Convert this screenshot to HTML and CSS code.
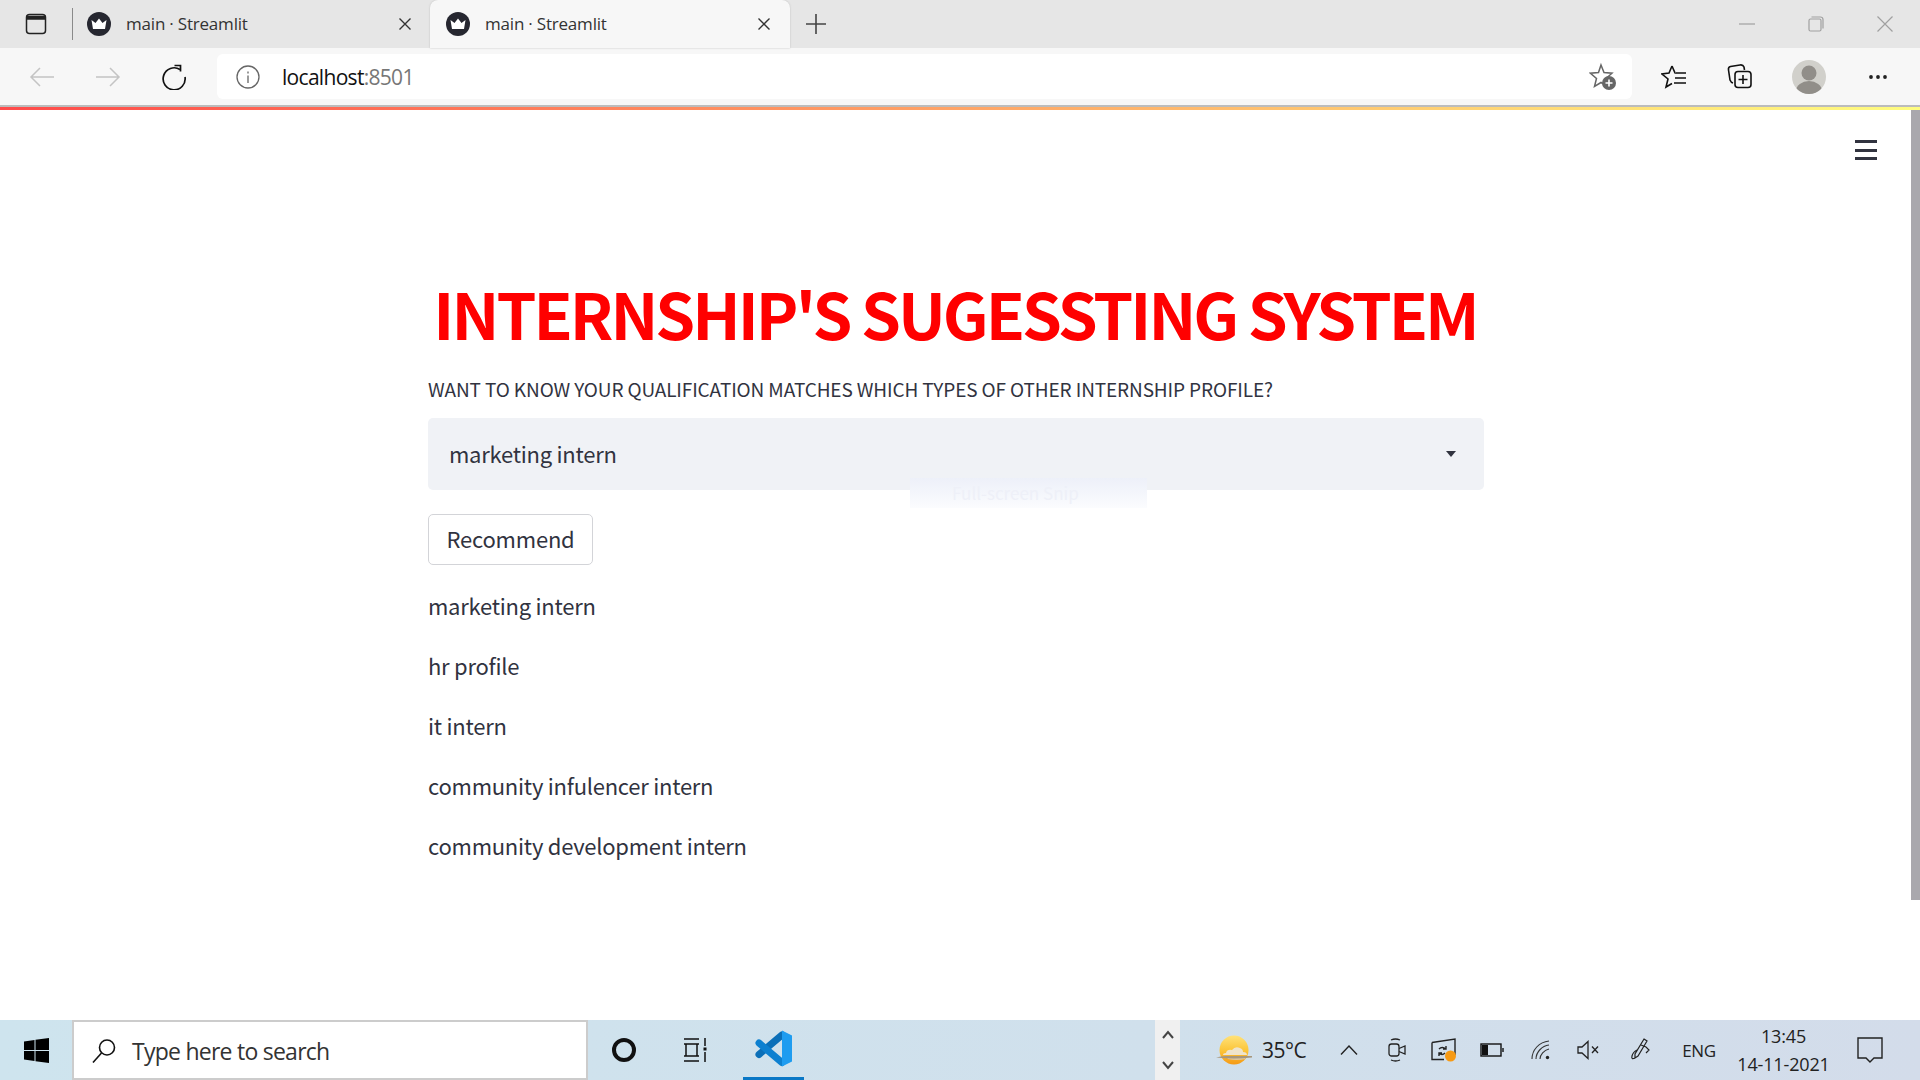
FILE: index.html
```html
<!DOCTYPE html>
<html lang="en">
<head>
	<meta charset="UTF-8">
	<title>main · Streamlit</title>
	<link rel="stylesheet" href="styles.css">
</head>
<body>
	<div class="tabstrip">
		<div class="strip-btn">
			<svg width="24" height="24" viewBox="0 0 24 24" fill="none" stroke="#222" stroke-width="1.5"><rect x="2.5" y="2.500" width="19" height="19" rx="3"/><path d="M3 4.500h18v2.500H3z" fill="#222"/></svg>
		</div>
		<div class="tab">
			<svg class="favicon" width="24" height="24" viewBox="0 0 24 24"><circle cx="12" cy="12" r="12" fill="#262730"/><path d="M4.500 8l4 3L12 6.500l3.500 4.500 4-3-1.500 9H6z" fill="#fff"/></svg>
			<span class="tab-title">main · Streamlit</span>
			<svg class="tab-close" width="14" height="14" viewBox="0 0 14 14" stroke="#333" stroke-width="1.4"><path d="M1.500 1.500l11 11M12.500 1.500l-11 11"/></svg>
		</div>
		<div class="tab tab-active">
			<svg class="favicon" width="24" height="24" viewBox="0 0 24 24"><circle cx="12" cy="12" r="12" fill="#262730"/><path d="M4.500 8l4 3L12 6.500l3.500 4.500 4-3-1.500 9H6z" fill="#fff"/></svg>
			<span class="tab-title">main · Streamlit</span>
			<svg class="tab-close" width="14" height="14" viewBox="0 0 14 14" stroke="#333" stroke-width="1.4"><path d="M1.500 1.500l11 11M12.500 1.500l-11 11"/></svg>
		</div>
		<div class="new-tab">
			<svg width="24" height="24" viewBox="0 0 24 24" stroke="#444" stroke-width="1.6"><path d="M12 2v20M2 12h20"/></svg>
		</div>
		<div class="win-btns">
			<svg width="16" height="16" viewBox="0 0 16 16" stroke="#a0a0a0" stroke-width="1.200"><path d="M0 8h16"/></svg>
			<svg width="16" height="16" viewBox="0 0 16 16" fill="none" stroke="#a0a0a0" stroke-width="1.200"><rect x="1" y="3" width="12" height="12" rx="1.500"/><path d="M3.500 1h9a2.500 2.500 0 0 1 2.500 2.500v9"/></svg>
			<svg width="16" height="16" viewBox="0 0 16 16" stroke="#a0a0a0" stroke-width="1.200"><path d="M0.500 0.500l15 15M15.500 0.500l-15 15"/></svg>
		</div>
	</div>

	<div class="toolbar">
		<div class="tool tool-back">
			<svg width="26" height="24" viewBox="0 0 26 24" fill="none" stroke="#c4c4c4" stroke-width="1.500"><path d="M25 12H2M11 3l-9 9 9 9"/></svg>
		</div>
		<div class="tool tool-forward">
			<svg width="26" height="24" viewBox="0 0 26 24" fill="none" stroke="#c4c4c4" stroke-width="1.500"><path d="M1 12h23M15 3l9 9-9 9"/></svg>
		</div>
		<div class="tool tool-reload">
			<svg width="26" height="26" viewBox="0 0 26 26" fill="none" stroke="#111" stroke-width="1.700"><path d="M19 5.500A11 11 0 1 0 24 13"/><path d="M13.500 1.500h6v6"/></svg>
		</div>
		<div class="addressbar">
			<svg class="info" width="24" height="24" viewBox="0 0 24 24" fill="none" stroke="#666" stroke-width="1.300"><circle cx="12" cy="12" r="11"/><path d="M12 10.500v7.500M12 6.500v2"/></svg>
			<span class="url">localhost<span class="url-port">:8501</span></span>
			<svg class="star-add" width="28" height="30" viewBox="0 0 28 30"><path d="M12 3l3 7.500 8 .7-6 5.300 1.500 8-6.500-4-6.500 4 2-8-6-5.300 8-.7z" fill="none" stroke="#666" stroke-width="1.500"/><circle cx="20" cy="21" r="7" fill="#666"/><path d="M20 17.500v7M16.500 21h7" stroke="#fff" stroke-width="1.600"/></svg>
		</div>
		<div class="tool tool-fav">
			<svg width="26" height="26" viewBox="0 0 26 26" fill="none" stroke="#111" stroke-width="1.600"><path d="M11 2l3 7h-0.500M11 2L8 9l-7 1 6 5-2 8 6-3.500"/><path d="M15 9h10M14 14h11M13 19h12"/></svg>
		</div>
		<div class="tool tool-coll">
			<svg width="26" height="28" viewBox="0 0 26 28" fill="none" stroke="#111" stroke-width="1.600"><path d="M6 20q-2-.5-3-3L1.500 7q-.5-3 2-3.500L13 2q3-.5 4 2l.500 3"/><rect x="8" y="8.500" width="16" height="16" rx="3"/><path d="M16 12v9M11.500 16.500h9"/></svg>
		</div>
		<div class="tool tool-avatar">
			<svg width="34" height="34" viewBox="0 0 34 34"><defs><clipPath id="ava"><circle cx="17" cy="17" r="17"/></clipPath></defs><circle cx="17" cy="17" r="17" fill="#d1d0cb"/><g clip-path="url(#ava)" fill="#918e89"><circle cx="17" cy="13" r="7.500"/><ellipse cx="17" cy="31" rx="13" ry="10"/></g></svg>
		</div>
		<div class="tool tool-more">
			<svg width="20" height="6" viewBox="0 0 20 6" fill="#222"><circle cx="3" cy="3" r="1.900"/><circle cx="10" cy="3" r="1.900"/><circle cx="17" cy="3" r="1.900"/></svg>
		</div>
	</div>
	<div class="loadbar"></div>

	<div class="page">
		<div class="menu-btn"><span></span><span></span><span></span></div>
		<div class="scrollthumb"></div>
		<main class="content">
			<h1 class="title">INTERNSHIP'S SUGESSTING SYSTEM</h1>
			<label class="field-label">WANT TO KNOW YOUR QUALIFICATION MATCHES WHICH TYPES OF OTHER INTERNSHIP PROFILE?</label>
			<div class="select">
				<span class="select-value">marketing intern</span>
				<span class="caret"></span>
			</div>
			<button class="recommend">Recommend</button>
			<p class="result">marketing intern</p>
			<p class="result">hr profile</p>
			<p class="result">it intern</p>
			<p class="result">community infulencer intern</p>
			<p class="result">community development intern</p>
			<div class="snip-ghost">Full-screen Snip</div>
		</main>
	</div>

	<div class="taskbar">
		<div class="start">
			<svg width="25" height="25" viewBox="0 0 25 25" fill="#000"><path d="M0 3.500l10.500-1.500v10H0zM11.500 1.800L25 0v12H11.500zM0 13h10.500v10L0 21.500zM11.500 13H25v12l-13.500-1.800z"/></svg>
		</div>
		<div class="search">
			<svg width="26" height="26" viewBox="0 0 26 26" fill="none" stroke="#111" stroke-width="1.600"><circle cx="16" cy="9.500" r="7.500"/><path d="M10.500 15L2 24.500"/></svg>
			<span>Type here to search</span>
		</div>
		<div class="task-icon cortana"><span class="ring"></span></div>
		<div class="task-icon taskview">
			<svg width="24" height="24" viewBox="0 0 24 24" fill="none" stroke="#111" stroke-width="1.500"><path d="M1 1h15M1 6h15M1 18h15M1 23h15M3 6v12M14 6v12M22 0v8M22 14v10"/><rect x="20.500" y="9.500" width="3" height="3" fill="#111" stroke="none"/></svg>
		</div>
		<div class="task-icon vscode">
			<svg width="37" height="37" viewBox="0 0 37 37" fill="none"><path d="M4 24.500L27 5" stroke="#0b6fb8" stroke-width="7" stroke-linecap="round"/><path d="M4 13l23 19.500" stroke="#0d80d0" stroke-width="7" stroke-linecap="round"/><path d="M27 0.500l10 5v26l-10 5z" fill="#1e9cf0"/></svg>
		</div>
		<div class="spacer"></div>
		<div class="tray-scroll">
			<svg width="14" height="10" viewBox="0 0 14 10" fill="none" stroke="#444" stroke-width="2"><path d="M2 8l5-6 5 6"/></svg>
			<svg width="14" height="10" viewBox="0 0 14 10" fill="none" stroke="#444" stroke-width="2"><path d="M2 2l5 6 5-6"/></svg>
		</div>
		<div class="weather">
			<svg width="36" height="30" viewBox="0 0 36 30"><defs><linearGradient id="sun" x1="0" y1="0" x2="0" y2="1"><stop offset="0" stop-color="#ffe27a"/><stop offset=".5" stop-color="#fcc63a"/><stop offset="1" stop-color="#f59a16"/></linearGradient></defs><circle cx="18" cy="15" r="14.500" fill="url(#sun)"/><path d="M10 18q1-4 6-3 3-4 8-2 3 1 3 4 4 0 4 3H7q0-2 3-2z" fill="#efe4cc"/><path d="M10 21h20l-1 3q-8 2-17 0z" fill="#dcc6a0"/><path d="M0 22.500q6-2 12-1.500h24v1.500q-18 2-36 0z" fill="#a8977c"/></svg>
			<span>35°C</span>
		</div>
		<div class="slot s48"><svg width="18" height="10" viewBox="0 0 18 10" fill="none" stroke="#222" stroke-width="1.400"><path d="M1 9.500L9 1l8 8.500"/></svg></div>
		<div class="slot s48"><svg width="18" height="24" viewBox="0 0 18 24" fill="none" stroke="#222" stroke-width="1.300"><rect x="1" y="6" width="10" height="12" rx="2.500"/><path d="M11 10.500l6-2.500v8l-6-2.500M3 2q4.500-2 9 0M3 22q4.500 2 9 0"/></svg></div>
		<div class="slot s46"><svg width="26" height="24" viewBox="0 0 26 24" fill="none" stroke="#222" stroke-width="1.400"><path d="M1 4.500L24 1v16M1 4.500V21.500h12"/><path d="M8 11q3-3 7 0M15 8v3h-3M14 15q-3 3-6 0M8 18v-3h3"/><circle cx="19.500" cy="18" r="5.500" fill="#f79a14" stroke="none"/></svg></div>
		<div class="slot s50"><svg width="24" height="14" viewBox="0 0 24 14" fill="none" stroke="#111" stroke-width="1.400"><rect x="1" y="1" width="20" height="12"/><rect x="2" y="2" width="6" height="10" fill="#111" stroke="none"/><path d="M23 5v4"/></svg></div>
		<div class="slot s48"><svg width="20" height="20" viewBox="0 0 20 20" fill="none" stroke="#333" stroke-width="1.100"><path d="M1 19C1 10 8 2 18 1M5 19C5 12 11 6 18 5M9 19c0-4 4-9 9-10"/><circle cx="16.500" cy="17.500" r="1.700" fill="#222" stroke="none"/></svg></div>
		<div class="slot s46"><svg width="22" height="20" viewBox="0 0 22 20" fill="none" stroke="#222" stroke-width="1.300"><path d="M1 7h4l6-5.500v17L5 13H1zM15 6.500l6 6.500M21 6.500L15 13"/></svg></div>
		<div class="slot s60"><svg width="22" height="24" viewBox="0 0 22 24" fill="none" stroke="#222" stroke-width="1.200"><path d="M14 1l3 2-9 15-3 2 0-4zM11 7l5 2 3 3-3 3M5 20q-4 2-3-2t5-6"/></svg></div>
		<div class="slot s58 eng">ENG</div>
		<div class="clock">
			<span>13:45</span>
			<span>14-11-2021</span>
		</div>
		<div class="slot s64"><svg width="26" height="26" viewBox="0 0 26 26" fill="none" stroke="#222" stroke-width="1.400"><path d="M1 1h24v20h-8l-4 4-4-4H1z"/></svg></div>
		<div class="tray-end"></div>
	</div>
</body>
</html>
```

FILE: styles.css
```css
html,body{
	margin:0;
	height:100%;
	overflow:hidden;
}
body{
	width:1920px;
	height:1080px;
	display:flex;
	flex-direction:column;
	font-family:"Open Sans","Liberation Sans",sans-serif;
	background:#fff;
}
svg{
	display:block;
	flex:none;
}

/* browser tabs */
.tabstrip{
	height:48px;
	flex:none;
	display:flex;
	align-items:stretch;
	background:#e6e6e6;
}
.strip-btn{
	width:71px;
	display:flex;
	align-items:center;
	justify-content:center;
	box-sizing:border-box;
}
.tab{
	width:359px;
	display:flex;
	align-items:center;
	box-sizing:border-box;
	padding-left:15px;
	border-left:1px solid transparent;
	position:relative;
}
.tabstrip .strip-btn + .tab::before{
	content:"";
	position:absolute;
	left:0;
	top:8px;
	bottom:8px;
	width:1px;
	background:#8a8a8a;
}
.tab-active{
	width:360px;
	background:#f7f7f7;
	border-radius:8px 8px 0 0;
	box-shadow:0 0 2px #bbb;
}
.tab-title{
	margin-left:15px;
	margin-bottom:2px;
	width:270px;
	font-size:17px;
	letter-spacing:-0.2px;
	color:#333;
	white-space:nowrap;
}
.tab-close{
	margin-left:2px;
}
.new-tab{
	width:52px;
	display:flex;
	align-items:center;
	justify-content:center;
}
.win-btns{
	margin-left:auto;
	width:200px;
	display:flex;
	align-items:center;
	gap:53px;
	padding-left:19px;
	box-sizing:border-box;
}

/* address row */
.toolbar{
	height:57px;
	flex:none;
	display:flex;
	align-items:center;
	background:#f7f7f7;
}
.tool{
	display:flex;
	align-items:center;
	justify-content:center;
}
.tool-back{
	width:84px;
}
.tool-forward{
	width:48px;
}
.tool-reload{
	width:84px;
}
.addressbar{
	width:1415px;
	height:45px;
	margin-left:1px;
	display:flex;
	align-items:center;
	background:#fff;
	border-radius:6px;
	box-sizing:border-box;
	padding:0 15px 0 19px;
}
.url{
	margin-left:22px;
	font-size:21px;
	letter-spacing:-0.7px;
	color:#111;
}
.url-port{
	color:#777;
}
.star-add{
	margin-left:auto;
}
.tool-fav{
	width:84px;
}
.tool-coll{
	width:48px;
}
.tool-avatar{
	width:90px;
}
.tool-more{
	width:48px;
}
.loadbar{
	height:5px;
	flex:none;
	box-sizing:border-box;
	border-top:2px solid #bcbcbc;
	background:linear-gradient(90deg,#ff4b4b,#fffd80);
}

/* streamlit page */
.page{
	flex:1;
	position:relative;
}
.menu-btn{
	position:absolute;
	top:30px;
	right:43px;
	width:22px;
	height:20px;
	display:flex;
	flex-direction:column;
	justify-content:space-between;
}
.menu-btn span{
	height:3px;
	background:#31333f;
}
.scrollthumb{
	position:absolute;
	top:0;
	right:0;
	width:9px;
	height:790px;
	background:#a9a8ad;
}
.content{
	width:1056px;
	margin-left:428px;
	position:relative;
	color:#31333f;
	font-family:"Noto Sans CJK SC","Noto Sans",sans-serif;
}
.title{
	margin:0;
	padding-top:172px;
	padding-right:2px;
	height:61px;
	line-height:61px;
	text-align:center;
	font-size:64px;
	font-weight:700;
	letter-spacing:-3px;
	color:#f00;
	white-space:nowrap;
}
.field-label{
	display:block;
	margin-top:33px;
	height:26px;
	line-height:26px;
	font-size:19px;
	letter-spacing:-0.12px;
	white-space:nowrap;
}
.select{
	margin-top:16px;
	height:72px;
	display:flex;
	align-items:center;
	justify-content:space-between;
	box-sizing:border-box;
	padding:0 28px 0 21px;
	background:#f0f2f6;
	border-radius:5px;
	font-size:22px;
	letter-spacing:-0.25px;
}
.select-value{
	margin-bottom:2px;
}
.caret{
	width:0;
	height:0;
	border-left:5px solid transparent;
	border-right:5px solid transparent;
	border-top:6px solid #31333f;
}
.recommend{
	display:block;
	margin-top:24px;
	width:165px;
	height:51px;
	padding:0 0 4px;
	background:#fff;
	border:1px solid #d3d4d8;
	border-radius:5px;
	font-family:inherit;
	font-size:22px;
	letter-spacing:-0.2px;
	color:#31333f;
}
.result{
	margin:0;
	height:60px;
	line-height:60px;
	font-size:22px;
	letter-spacing:-0.25px;
	white-space:nowrap;
}
.recommend + .result{
	margin-top:10px;
}
.snip-ghost{
	position:absolute;
	left:482px;
	top:368px;
	width:237px;
	height:30px;
	line-height:30px;
	padding-left:42px;
	box-sizing:border-box;
	font-size:17px;
	color:#eef0f8;
	background:linear-gradient(#edf0f9,#fbfcfe);
}

/* windows taskbar */
.taskbar{
	height:60px;
	flex:none;
	display:flex;
	align-items:stretch;
	background:linear-gradient(90deg,#cee4ee,#d0e0ec 60%,#d3dcea);
	font-family:"Open Sans","Liberation Sans",sans-serif;
	color:#222;
}
.start{
	width:72px;
	display:flex;
	align-items:center;
	justify-content:center;
}
.search{
	width:516px;
	display:flex;
	align-items:center;
	gap:15px;
	box-sizing:border-box;
	padding:1px 0 0 17px;
	background:#fff;
	border:2px solid #ccc;
	font-size:23px;
	letter-spacing:-0.75px;
	color:#333;
}
.task-icon{
	display:flex;
	align-items:center;
	justify-content:center;
}
.cortana{
	width:72px;
}
.ring{
	width:16px;
	height:16px;
	border:4px solid #111;
	border-radius:50%;
}
.taskview{
	width:70px;
}
.vscode{
	width:61px;
	margin-left:13px;
	box-sizing:border-box;
	border-bottom:3px solid #0a78c6;
}
.spacer{
	flex:1;
}
.tray-scroll{
	width:25px;
	display:flex;
	flex-direction:column;
	align-items:center;
	justify-content:space-around;
	background:#f0f0f0;
}
.weather{
	width:145px;
	display:flex;
	align-items:center;
	gap:10px;
	box-sizing:border-box;
	padding-left:36px;
	font-size:21px;
	letter-spacing:-0.5px;
}
.slot{
	display:flex;
	align-items:center;
	justify-content:center;
}
.s46{width:46px;}
.s48{width:48px;}
.s50{width:50px;}
.s58{width:58px;}
.s60{width:60px;}
.s64{width:64px;}
.eng{
	font-size:17px;
	letter-spacing:-0.3px;
	padding-right:2px;
	box-sizing:border-box;
}
.clock{
	width:109px;
	display:flex;
	flex-direction:column;
	align-items:center;
	justify-content:center;
	gap:6px;
	font-size:18px;
	line-height:22px;
	letter-spacing:-0.15px;
	white-space:nowrap;
}
.tray-end{
	width:18px;
}
```
